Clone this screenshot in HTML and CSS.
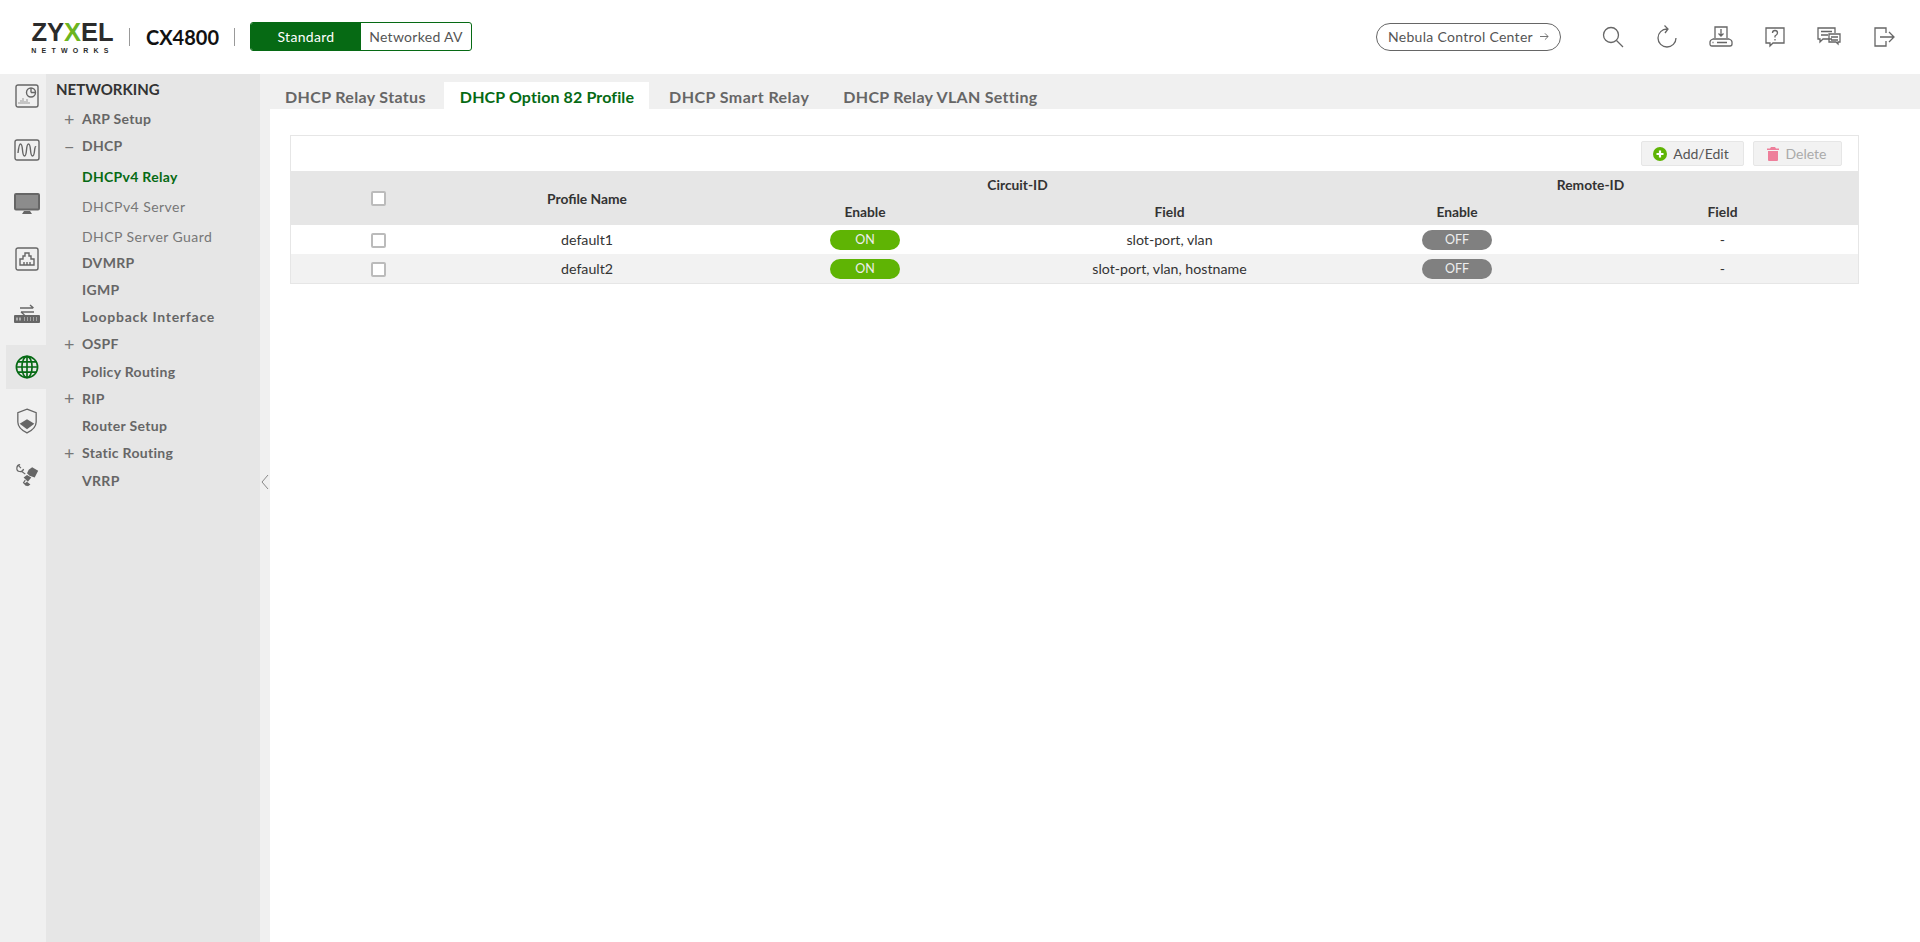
FILE: index.html
```html
<!DOCTYPE html>
<html lang="en">
<head>
<meta charset="utf-8">
<title>CX4800</title>
<link rel="stylesheet" href="styles.css">
</head>
<body>
<header class="top">
  <div class="logo"><div class="logo-main">ZY<span class="x">X</span>EL</div><div class="logo-sub">NETWORKS</div></div>
  <span class="vsep"></span>
  <span class="model">CX4800</span>
  <span class="vsep"></span>
  <div class="mode"><span class="mode-on">Standard</span><span class="mode-off">Networked AV</span></div>
  <div class="spacer"></div>
  <a class="nebula">Nebula Control Center <svg class="arrow" viewBox="0 0 10 10"><path d="M0 5h9M5.500 1.500L9 5 5.500 8.500"/></svg></a>
  <div class="top-icons">
    <svg viewBox="0 0 24 24"><circle cx="10" cy="10" r="7.500"/><path d="M15.500 15.500l6.500 6.500"/></svg>
    <svg viewBox="0 0 24 24"><path d="M12 4A9 9 0 1 0 21 13M9.500 0.500L13 4l-3 4"/></svg>
    <svg viewBox="0 0 24 24"><path d="M6 13V2h12v11M12 4v7M9.500 8.500L12 11l2.500-2.500M1 19v-2q0-2 3-3h16q3 1 3 3v2q0 2-2 2H3q-2 0-2-2zM8 17.500h10M3.500 17.500h1"/></svg>
    <svg viewBox="0 0 24 24"><path d="M3 3h18v15H10l-3 3v-3H3zM9.500 8q0-2.500 2.500-2.500t2.500 2.500q0 1.500-2.500 3v1.500M12 14v1.500"/></svg>
    <svg viewBox="0 0 24 24"><path d="M15 14H6l-3 3v-3H1V3h17v5M4 6.500h11M4 10h7M12 9h11v8h-2v2l-2-2h-7zM14 12h7M14 15h7"/></svg>
    <svg viewBox="0 0 24 24"><path d="M15 8V3H4v18h11v-5M9 12h13M18 7l5 5-5 5"/></svg>
  </div>
</header>
<div class="body">
  <aside class="rail">
    <div class="rail-item"><svg viewBox="0 0 24 24"><rect x="1" y="1" width="22" height="22" rx="2"/><circle cx="16" cy="8.500" r="4.500"/><path d="M16 8.500V4M16 8.500h4.500"/><path class="thin" d="M4 20v-2M6 20v-4M8 20v-6M10 20v-3M12 20v-5M14 20v-2"/></svg></div>
    <div class="rail-item"><svg viewBox="0 0 26 22"><rect x="1" y="1" width="24" height="20" rx="2"/><path d="M4 14q1-9 2.500-9t2 6 2 6 2-6 2-6 2 6 2 6 2-5 1.500-4"/></svg></div>
    <div class="rail-item"><svg viewBox="0 0 26 22"><rect class="fill" x="1" y="1" width="24" height="15.500" rx="1"/><path class="solid" d="M8 21l2-3h6l2 3z"/></svg></div>
    <div class="rail-item"><svg viewBox="0 0 24 24"><rect x="1" y="1" width="22" height="22" rx="2"/><path d="M5 18v-6h3V9h2V6h4v3h2v3h3v6zM9 18v-3M12 18v-3M15 18v-3"/></svg></div>
    <div class="rail-item"><svg viewBox="0 0 28 24"><path d="M7 7h13M17 4l3.500 3M21 11H8M11.500 14L8 11"/><rect class="solid" x="1" y="14" width="26" height="8" rx="1"/><path class="holes" d="M4 16.500v3M7 16.500v3M11 17h1M14 17h1M17 17h1M20 17h1M23 17h1M11 19h1M14 19h1M17 19h1M20 19h1M23 19h1"/></svg></div>
    <div class="rail-item rail-active"><svg class="globe" viewBox="0 0 26 26"><circle cx="13" cy="13" r="11.500"/><ellipse cx="13" cy="13" rx="5.500" ry="11.500"/><path d="M13 1.500v23M1.500 13h23M3 7.500h20M3 18.500h20"/></svg></div>
    <div class="rail-item"><svg viewBox="0 0 24 28"><path d="M12 1l10 4v10q0 7-10 12Q2 22 2 15V5z"/><path class="solid" d="M4 17l8-5 8 5-8 6z"/></svg></div>
    <div class="rail-item"><svg viewBox="0 0 28 28"><path d="M10 7a4 4 0 1 1-4-5M7 6L4 3M8 10l4 3M12 20l-2 3 3 3 3-1"/><path class="solid" d="M16 8l4-3 7 4-4 8-6-2-3-3zM10 17l4-3 5 3-4 5zM11 24l3-2 4 3-3 2z"/></svg></div>
  </aside>
  <nav class="nav">
    <div class="nav-title">NETWORKING</div>
    <ul class="menu">
      <li class="m1"><i>+</i>ARP Setup</li>
      <li class="m1"><i>−</i>DHCP</li>
      <li class="m2 cur">DHCPv4 Relay</li>
      <li class="m2">DHCPv4 Server</li>
      <li class="m2 guard">DHCP Server Guard</li>
      <li class="m1"><i></i>DVMRP</li>
      <li class="m1"><i></i>IGMP</li>
      <li class="m1"><i></i>Loopback Interface</li>
      <li class="m1"><i>+</i>OSPF</li>
      <li class="m1"><i></i>Policy Routing</li>
      <li class="m1"><i>+</i>RIP</li>
      <li class="m1"><i></i>Router Setup</li>
      <li class="m1"><i>+</i>Static Routing</li>
      <li class="m1"><i></i>VRRP</li>
    </ul>
  </nav>
  <div class="gutter"><span class="collapse"><svg viewBox="0 0 8 16"><path d="M7 1L1 8l6 7"/></svg></span></div>
  <main class="main">
    <div class="tabs">
      <span class="tab t1">DHCP Relay Status</span>
      <span class="tab active">DHCP Option 82 Profile</span>
      <span class="tab t3">DHCP Smart Relay</span>
      <span class="tab">DHCP Relay VLAN Setting</span>
    </div>
    <section class="panel">
      <div class="toolbar">
        <button class="btn add"><svg viewBox="0 0 14 14"><circle cx="7" cy="7" r="7" fill="#5fb404"/><path d="M7 3.500v7M3.500 7h7" stroke="#fff" stroke-width="2.200"/></svg>Add/Edit</button>
        <button class="btn off"><svg viewBox="0 0 12 14"><path fill="#ee7f9b" d="M4 0h4l1 1.500h3v1.500H0V1.500h3zM1 4h10v9q0 1-1 1H2q-1 0-1-1z"/></svg>Delete</button>
      </div>
      <table class="grid">
        <colgroup><col class="c1"><col class="c2"><col class="c3"><col class="c4"><col class="c5"><col class="c6"></colgroup>
        <thead>
          <tr class="h1"><th rowspan="2"><span class="cb"></span></th><th rowspan="2">Profile Name</th><th colspan="2" class="circuit">Circuit-ID</th><th colspan="2" class="remote">Remote-ID</th></tr>
          <tr class="h2"><th>Enable</th><th>Field</th><th>Enable</th><th class="last">Field</th></tr>
        </thead>
        <tbody>
          <tr><td><span class="cb"></span></td><td>default1</td><td><span class="pill on">ON</span></td><td>slot-port, vlan</td><td><span class="pill">OFF</span></td><td class="last">-</td></tr>
          <tr class="alt"><td><span class="cb"></span></td><td>default2</td><td><span class="pill on">ON</span></td><td>slot-port, vlan, hostname</td><td><span class="pill">OFF</span></td><td class="last">-</td></tr>
        </tbody>
      </table>
    </section>
  </main>
</div>
</body>
</html>
```
FILE: styles.css
```css
* { box-sizing: border-box; }
html, body { margin: 0; height: 100%; }
body { font-family: "Lato", "Liberation Sans", sans-serif; color: #333; background: #fff; display: flex; flex-direction: column; height: 942px; overflow: hidden; }

.top { height: 74px; flex: none; display: flex; align-items: center; padding-left: 31px; background: #fff; }
.logo { width: 83px; color: #2b2b2b; text-align: center; margin-top: 4px; font-family: "Liberation Sans", sans-serif; }
.logo-main { font-size: 25.500px; line-height: 20px; font-weight: 700; white-space: nowrap; }
.logo-main .x { color: #6cb51f; }
.logo-sub { font-size: 7px; line-height: 10px; font-weight: 700; letter-spacing: 5.200px; margin-top: 3.400px; white-space: nowrap; }
.vsep { width: 1px; height: 18px; background: #999; }
.logo + .vsep { margin-left: 15px; }
.model { font-size: 20px; font-weight: 700; color: #111; margin: 0 14px 0 15px; width: 75px; text-align: center; }
.mode { display: flex; width: 222px; height: 29px; border: 1px solid #066a14; border-radius: 3px; margin: -1px 0 0 15px; overflow: hidden; font-size: 14px; }
.mode-on { width: 110px; background: #066a14; color: #fff; display: flex; align-items: center; justify-content: center; letter-spacing: .3px; }
.mode-off { flex: 1; color: #555; display: flex; align-items: center; justify-content: center; letter-spacing: .3px; }
.spacer { flex: 1; }
.nebula { width: 185px; height: 28px; margin-top: -1px; border: 1px solid #666; border-radius: 14px; display: flex; align-items: center; justify-content: center; gap: 7px; font-size: 14px; color: #555; letter-spacing: .3px; }
.arrow { width: 9px; height: 9px; fill: none; stroke: #666; stroke-width: 1; }
.top-icons { display: flex; align-items: center; gap: 30px; margin: -1px 25px 0 40px; }
.top-icons svg { width: 24px; height: 24px; fill: none; stroke: #666; stroke-width: 1.300; }

.body { flex: 1; display: flex; min-height: 0; }
.rail { width: 46px; flex: none; background: #f0f0f0; display: flex; flex-direction: column; gap: 10.200px; padding-left: 6px; }
.rail-item { height: 44px; width: 40px; flex: none; display: flex; align-items: center; justify-content: center; }
.rail-item svg { width: 24px; height: 24px; margin-left: 1px; fill: none; stroke: #666; stroke-width: 1.400; }
.rail-item:nth-child(2) svg, .rail-item:nth-child(3) svg { width: 26px; height: 22px; }
.rail-item:nth-child(5) svg, .rail-item:nth-child(8) svg { width: 28px; }
.rail-item:nth-child(7) svg { width: 22px; height: 26px; }
.rail-item svg .fill { fill: #8c8c8c; stroke: #666; stroke-width: 2; }
.rail-item svg .solid { fill: #666; stroke: none; }
.rail-item svg .thin { stroke: #999; stroke-width: 1; }
.rail-item svg .holes { stroke: #ddd; stroke-width: 1.200; }
.rail-active { background: #e6e6e6; }
.rail-item .globe { stroke: #066a14; stroke-width: 1.800; }

.nav { width: 214px; flex: none; background: #e6e6e6; padding: 5px 0 0 10px; }
.nav-title { font-size: 15px; line-height: 20px; font-weight: 700; color: #333; }
.menu { list-style: none; margin: 6px 0 0; padding: 0; font-size: 14px; letter-spacing: .3px; }
.menu li { height: 27.250px; display: flex; align-items: center; color: #666; font-weight: 700; }
.menu li:nth-child(8) { letter-spacing: .75px; }
.menu .m1 i { font-style: normal; font-weight: 400; font-size: 18px; width: 26px; padding-left: 8px; color: #777; }
.menu .m2 { padding-left: 26px; height: 30px; font-weight: 400; color: #777; letter-spacing: .45px; }
.menu .m2.cur { color: #066a14; font-weight: 700; letter-spacing: .3px; margin-top: 1.500px; }
.menu .m2.guard { margin-bottom: -2.500px; }

.gutter { width: 10px; flex: none; background: #f0f0f0; display: flex; flex-direction: column; }
.collapse { margin-top: 397px; height: 22px; display: flex; align-items: center; justify-content: center; background: #f0f0f0; }
.collapse svg { width: 8px; height: 16px; fill: none; stroke: #888; stroke-width: 1; }

.main { flex: 1; min-width: 0; background: #fff; }
.tabs { height: 35px; background: #f0f0f0; display: flex; align-items: flex-end; }
.tab { height: 27px; padding: 2px 17px 0 17px; display: flex; align-items: center; font-size: 16px; font-weight: 700; color: #666; letter-spacing: .3px; }
.tab.t1 { padding: 2px 18px 0 15px; letter-spacing: .35px; }
.tab.active { background: #fff; color: #066a14; letter-spacing: .12px; padding: 2px 15px 0 16px; }
.tab.t3 { padding-left: 20px; letter-spacing: .45px; }

.panel { margin: 26px 0 0 20px; width: 1569px; border: 1px solid #e6e6e6; }
.toolbar { height: 35px; display: flex; justify-content: flex-end; align-items: flex-start; gap: 9px; padding: 5px 16px 0 0; }
.btn { height: 25px; justify-content: center; padding: 0 3px 0 0; border: 1px solid #e6e6e6; border-radius: 2px; background: #f2f2f2; display: flex; align-items: center; gap: 6px; font: 400 14px "Lato", sans-serif; color: #555; }
.btn.add { width: 103px; }
.btn.off { width: 89px; color: #aaa; }
.btn svg { width: 14px; height: 14px; }
.grid { width: 100%; border-collapse: collapse; table-layout: fixed; font-size: 14.200px; }
.c1 { width: 175px; } .c2 { width: 242px; } .c3 { width: 314px; } .c4 { width: 295px; } .c5 { width: 280px; } .c6 { width: auto; }
.grid th { background: #e6e6e6; font-weight: 700; color: #333; text-align: center; padding: 0; font-size: 13.800px; }
.grid th.circuit { padding-left: 10px; }
.grid th.remote { padding-left: 6px; }
.grid .last { padding-right: 10px; }
.h1 { height: 27px; } .h2 { height: 27px; }
.grid td { height: 29px; text-align: center; padding: 0; color: #333; }
.alt td { background: #f2f2f2; }
.cb { display: inline-block; width: 15px; height: 15px; border: 2px solid #bbb; border-radius: 2px; background: #fff; vertical-align: middle; }
.h1 .cb { margin-top: -3px; }
.pill { display: inline-flex; align-items: center; justify-content: center; width: 70px; height: 20px; border-radius: 10px; background: #808080; color: #eee; font-size: 12.500px; vertical-align: middle; }
.pill.on { background: #5fb404; }
```
